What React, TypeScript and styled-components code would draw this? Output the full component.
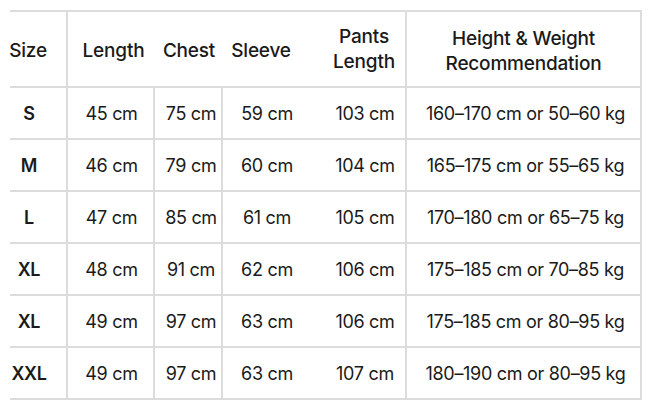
import styled, { createGlobalStyle } from 'styled-components'

const GlobalStyle = createGlobalStyle`
  html, body {
    margin: 0;
    padding: 0;
    background: #ffffff;
  }
  body {
    font-family: Inter, "Liberation Sans", Arial, sans-serif;
    color: #1a1a1a;
  }
`

const Page = styled.div`
  width: 650px;
  height: 403px;
  padding: 10px 0 0 10px;
  box-sizing: border-box;
  overflow: hidden;
`

const Table = styled.div`
  display: grid;
  grid-template-columns: 58px 87px 68px 86px 98px 235px;
  width: 632px;
  border-top: 2px solid #dcdcdc;
`

const HeaderCell = styled.div<{ $divider?: boolean; $pad?: string }>`
  height: 76px;
  box-sizing: border-box;
  display: flex;
  align-items: center;
  justify-content: center;
  text-align: center;
  font-size: 19px;
  font-weight: 500;
  line-height: 25px;
  letter-spacing: -0.2px;
  padding: ${p => p.$pad ?? '3px 0 0 0'};
  border-bottom: 2px solid #dcdcdc;
  border-right: ${p => (p.$divider ? '2px solid #dcdcdc' : 'none')};
`

const Cell = styled.div<{ $divider?: boolean; $pad?: string; $bold?: boolean }>`
  height: 52px;
  box-sizing: border-box;
  display: flex;
  align-items: center;
  justify-content: center;
  font-size: 18px;
  font-weight: ${p => (p.$bold ? 600 : 400)};
  letter-spacing: -0.3px;
  white-space: nowrap;
  padding: ${p => p.$pad ?? '0'};
  border-bottom: 2px solid #dcdcdc;
  border-right: ${p => (p.$divider ? '2px solid #dcdcdc' : 'none')};
`

interface SizeRow {
  size: string
  length: string
  chest: string
  sleeve: string
  pants: string
  rec: string
}

const rows: SizeRow[] = [
  { size: 'S', length: '45 cm', chest: '75 cm', sleeve: '59 cm', pants: '103 cm', rec: '160–170 cm or 50–60 kg' },
  { size: 'M', length: '46 cm', chest: '79 cm', sleeve: '60 cm', pants: '104 cm', rec: '165–175 cm or 55–65 kg' },
  { size: 'L', length: '47 cm', chest: '85 cm', sleeve: '61 cm', pants: '105 cm', rec: '170–180 cm or 65–75 kg' },
  { size: 'XL', length: '48 cm', chest: '91 cm', sleeve: '62 cm', pants: '106 cm', rec: '175–185 cm or 70–85 kg' },
  { size: 'XL', length: '49 cm', chest: '97 cm', sleeve: '63 cm', pants: '106 cm', rec: '175–185 cm or 80–95 kg' },
  { size: 'XXL', length: '49 cm', chest: '97 cm', sleeve: '63 cm', pants: '107 cm', rec: '180–190 cm or 80–95 kg' },
]

export default function App() {
  return (
    <>
      <GlobalStyle />
      <Page>
        <Table>
          <HeaderCell $divider $pad="3px 20px 0 0">Size</HeaderCell>
          <HeaderCell $pad="3px 0 0 4px">Length</HeaderCell>
          <HeaderCell>Chest</HeaderCell>
          <HeaderCell $pad="3px 10px 0 0">Sleeve</HeaderCell>
          <HeaderCell $divider $pad="0 0 0 14px">
            Pants
            <br />
            Length
          </HeaderCell>
          <HeaderCell $divider>
            Height &amp; Weight
            <br />
            Recommendation
          </HeaderCell>
          {rows.map((row, i) => (
            <RowCells key={i} row={row} />
          ))}
        </Table>
      </Page>
    </>
  )
}

const RowCells = ({ row }: { row: SizeRow }) => (
  <>
    <Cell $divider $bold $pad="0 18px 0 0">{row.size}</Cell>
    <Cell $divider $pad="0 0 0 2px">{row.length}</Cell>
    <Cell $divider $pad="0 0 0 6px">{row.chest}</Cell>
    <Cell $pad="0 0 0 2px">{row.sleeve}</Cell>
    <Cell $divider $pad="0 0 0 16px">{row.pants}</Cell>
    <Cell $divider $pad="0 0 0 4px">{row.rec}</Cell>
  </>
)
